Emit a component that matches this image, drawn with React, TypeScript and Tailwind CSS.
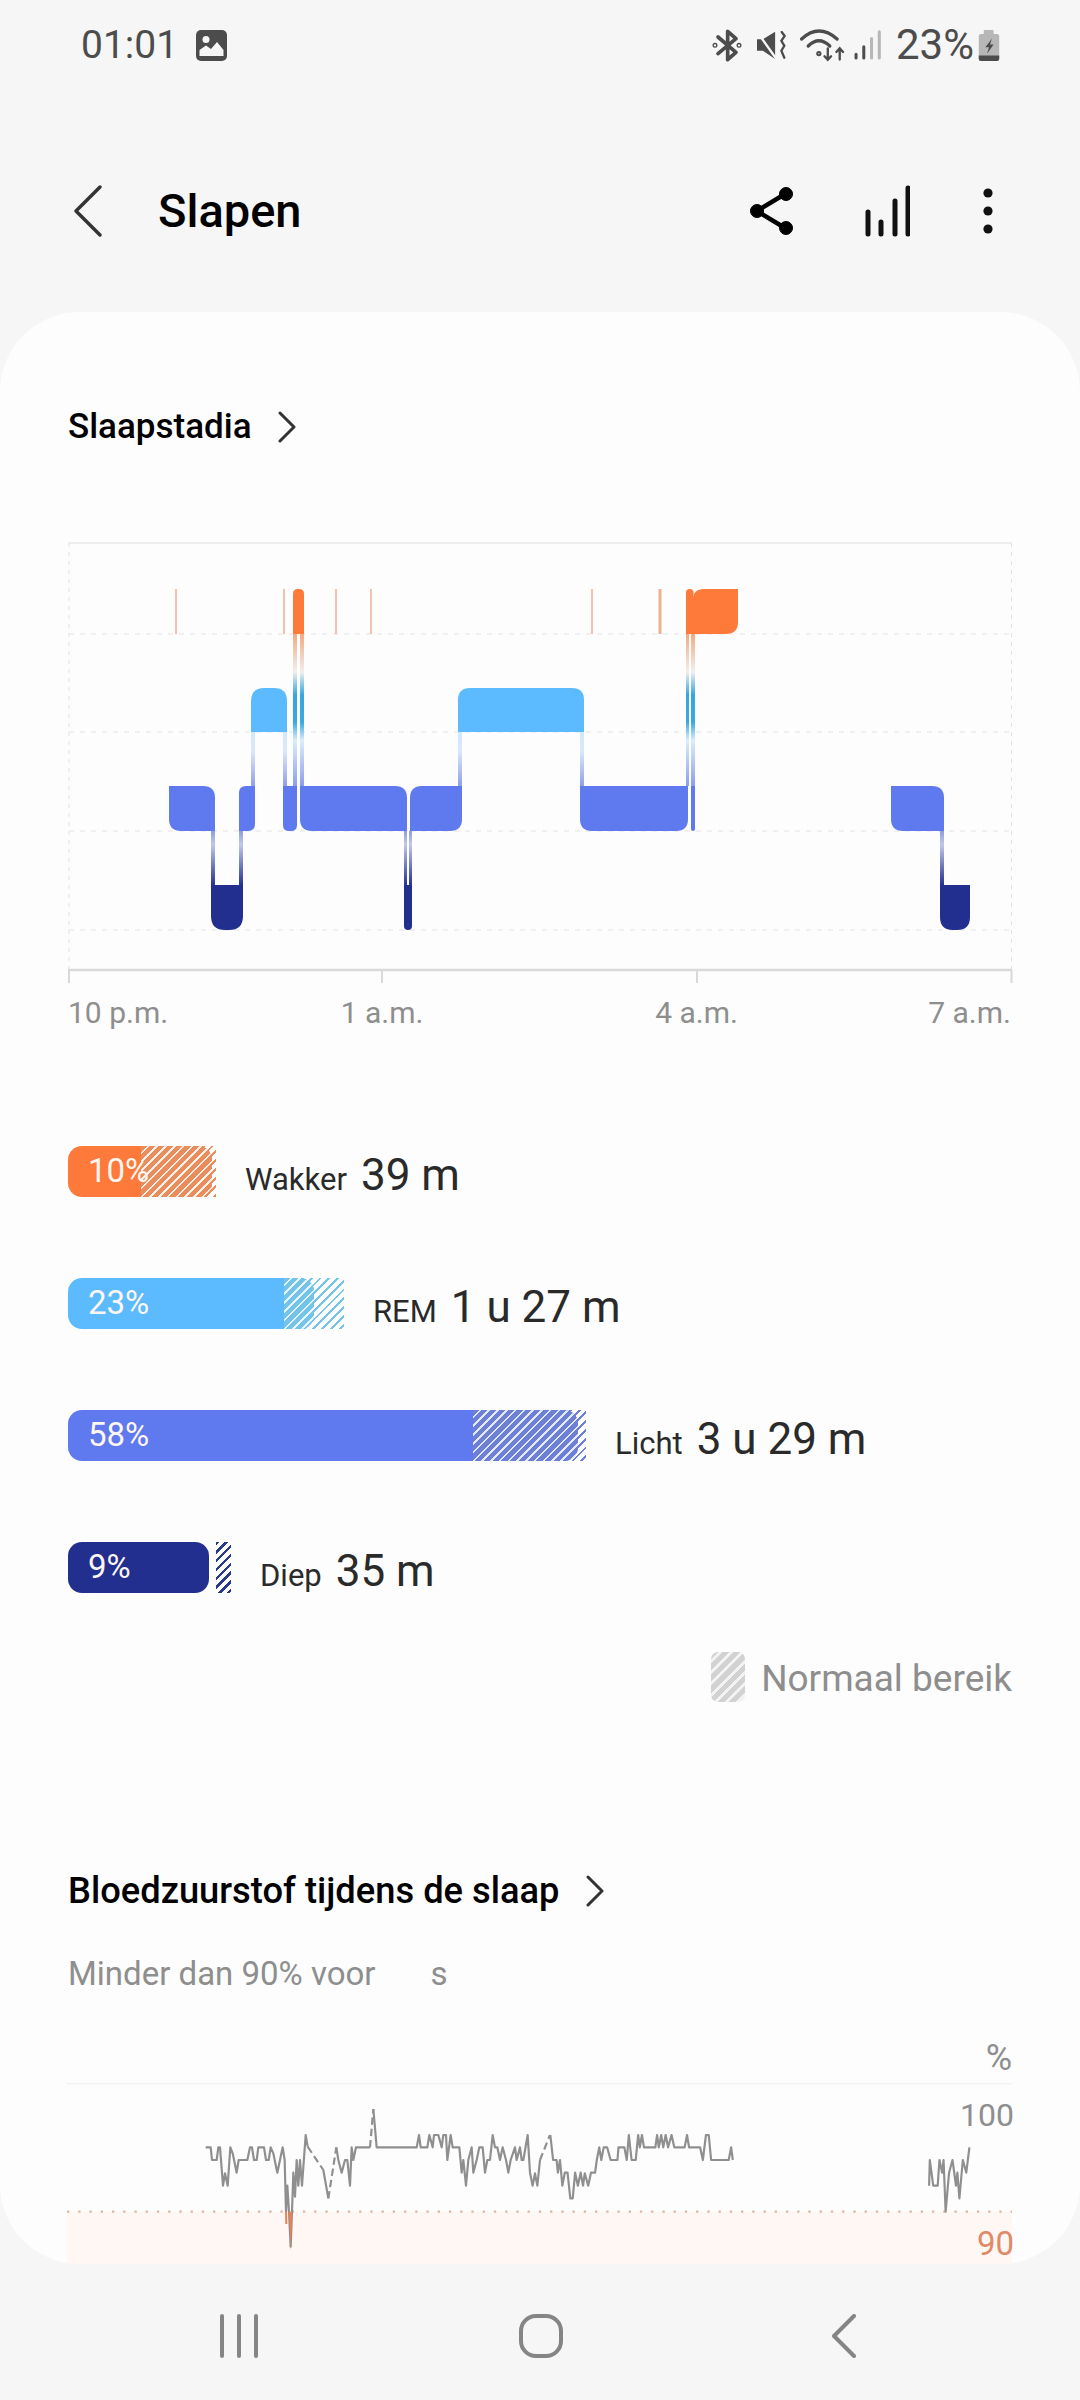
// Sleep detail screen
const ORANGE = "#fd7a3b";
const REM = "#5cbbfe";
const LIGHT = "#5f79ee";
const DEEP = "#222f8e";

// rounded rect with its own radius per corner, for the hypnogram blocks
function rr(x0: number, y0: number, x1: number, y1: number, tl: number, tr: number, br: number, bl: number) {
  return `M${x0 + tl} ${y0}H${x1 - tr}Q${x1} ${y0} ${x1} ${y0 + tr}V${y1 - br}Q${x1} ${y1} ${x1 - br} ${y1}H${x0 + bl}Q${x0} ${y1} ${x0} ${y1 - bl}V${y0 + tl}Q${x0} ${y0} ${x0 + tl} ${y0}Z`;
}

const lightBlocks = [
  rr(169, 786, 215, 831, 0, 12, 0, 12),
  rr(239, 786, 255, 831, 7, 0, 7, 0),
  rr(283, 786, 297, 831, 0, 0, 6, 6),
  rr(300, 786, 407, 831, 0, 12, 0, 12),
  rr(410, 786, 462, 831, 12, 0, 12, 0),
  rr(580, 786, 688, 831, 0, 0, 12, 12),
  rr(691, 786, 695, 831, 0, 0, 2, 2),
  rr(891, 786, 944, 831, 0, 12, 0, 12),
];
const remBlocks = [rr(251, 688, 287, 732, 13, 13, 0, 0), rr(458, 688, 584, 732, 12, 12, 0, 0)];
const deepBlocks = [
  rr(211, 885, 243, 930, 0, 0, 14, 14),
  rr(404, 885, 412, 930, 0, 0, 4, 4),
  rr(940, 885, 970, 930, 0, 0, 13, 13),
];
const awakeBlocks = [rr(293, 589, 304, 634, 5, 5, 0, 0), rr(686, 589, 693.5, 634, 3.5, 3.5, 0, 0), rr(693, 589, 738, 634, 11, 0, 12, 0)];

function SleepChart() {
  return (
    <svg viewBox="68 540 946 445" className="block h-[445px] w-[946px]">
      <defs>
        <linearGradient id="lightDeep" x1="0" y1="0" x2="0" y2="1">
          <stop offset="0" stopColor="#8f9eda" />
          <stop offset="0.25" stopColor="#c0c8e8" />
          <stop offset="1" stopColor="#27348f" />
        </linearGradient>
        <linearGradient id="remLight" x1="0" y1="0" x2="0" y2="1">
          <stop offset="0" stopColor="#cfe9fc" />
          <stop offset="0.35" stopColor="#dbe8fa" />
          <stop offset="1" stopColor="#8fa0e8" />
        </linearGradient>
        <linearGradient id="awakeLight" x1="0" y1="0" x2="0" y2="1">
          <stop offset="0" stopColor="#f2a980" />
          <stop offset="0.25" stopColor="#f1efee" />
          <stop offset="0.4" stopColor="#38a6dd" />
          <stop offset="0.58" stopColor="#3ba8e0" />
          <stop offset="0.7" stopColor="#dcedfb" />
          <stop offset="1" stopColor="#8c9eea" />
        </linearGradient>
      </defs>

      <line x1="68" x2="1012" y1="543" y2="543" stroke="#eeeeee" strokeWidth="2" />
      {[634, 732, 831, 930].map((y) => (
        <line key={y} x1="69" x2="1011" y1={y} y2={y} stroke="#e4e4e4" strokeWidth="1.2" strokeDasharray="5 6" />
      ))}
      {[69, 1011.5].map((x) => (
        <line key={x} x1={x} x2={x} y1="543" y2="970" stroke="#e2e2e2" strokeWidth="1" strokeDasharray="4 5" />
      ))}

      {/* transitions */}
      {[
        [211, 215],
        [239, 243],
        [404, 407],
        [409, 412],
        [940, 944],
      ].map(([a, b]) => (
        <rect key={a} x={a} y="831" width={b - a} height="54" fill="url(#lightDeep)" />
      ))}
      {[
        [251, 255],
        [283, 287],
        [458, 462],
        [580, 584],
      ].map(([a, b]) => (
        <rect key={a} x={a} y="732" width={b - a} height="54" fill="url(#remLight)" />
      ))}
      {[
        [293, 297],
        [300, 304],
        [686, 689],
        [691, 695],
      ].map(([a, b]) => (
        <rect key={a} x={a} y="634" width={b - a} height="152" fill="url(#awakeLight)" />
      ))}

      {/* short awake moments */}
      {[176, 284, 336, 371, 592].map((x) => (
        <line key={x} x1={x} x2={x} y1="589" y2="634" stroke="#f0c3aa" strokeWidth="2" />
      ))}
      <line x1="660" x2="660" y1="589" y2="634" stroke="#efb08f" strokeWidth="3" />

      {awakeBlocks.map((d) => (
        <path key={d} d={d} fill={ORANGE} />
      ))}
      {remBlocks.map((d) => (
        <path key={d} d={d} fill={REM} />
      ))}
      {lightBlocks.map((d) => (
        <path key={d} d={d} fill={LIGHT} />
      ))}
      {deepBlocks.map((d) => (
        <path key={d} d={d} fill={DEEP} />
      ))}

      <line x1="68" x2="1012" y1="970" y2="970" stroke="#d9d9d9" strokeWidth="2.5" />
      {[69, 382, 697, 1011.5].map((x) => (
        <line key={x} x1={x} x2={x} y1="970" y2="983" stroke="#d9d9d9" strokeWidth="2" />
      ))}
    </svg>
  );
}

const stages = [
  {
    pct: "10%",
    label: "Wakker",
    value: "39 m",
    wrap: "w-[148px]",
    solid: "w-[144px] bg-[#fd7a3b]",
    over: "left-[73px] w-[71px] bg-[repeating-linear-gradient(135deg,#e98d5c_0_4.4px,#fff1e9_4.4px_6.2px)]",
    outer: "left-[73px] w-[75px] bg-[repeating-linear-gradient(135deg,#e98d5c_0_2px,#ffffff_2px_6.2px)]",
  },
  {
    pct: "23%",
    label: "REM",
    value: "1 u 27 m",
    wrap: "w-[276px]",
    solid: "w-[246px] bg-[#5cbbfe]",
    over: "left-[216px] w-[30px] bg-[repeating-linear-gradient(135deg,#74c3e8_0_4.4px,#e6f5fd_4.4px_6.2px)]",
    outer: "left-[216px] w-[60px] bg-[repeating-linear-gradient(135deg,#74c3e8_0_2px,#ffffff_2px_6.2px)]",
  },
  {
    pct: "58%",
    label: "Licht",
    value: "3 u 29 m",
    wrap: "w-[518px]",
    solid: "w-[510px] bg-[#5f79ee]",
    over: "left-[405px] w-[105px] bg-[repeating-linear-gradient(135deg,#6b80d6_0_4.4px,#e3e8fb_4.4px_6.2px)]",
    outer: "left-[405px] w-[113px] bg-[repeating-linear-gradient(135deg,#6b80d6_0_2px,#ffffff_2px_6.2px)]",
  },
  {
    pct: "9%",
    label: "Diep",
    value: "35 m",
    wrap: "w-[163px]",
    solid: "w-[141px] bg-[#222f8e]",
    over: "",
    outer: "left-[148px] w-[15px] bg-[repeating-linear-gradient(135deg,#2a3a8a_0_2.4px,#ffffff_2.4px_6.2px)]",
  },
];

function StageRow({ s }: { s: (typeof stages)[number] }) {
  return (
    <div className="flex h-[51px] items-center">
      <div className={`relative h-[51px] shrink-0 ${s.wrap}`}>
        <div className={`absolute inset-y-0 ${s.outer}`} />
        <div className={`absolute inset-y-0 left-0 overflow-hidden rounded-[14px] ${s.solid}`}>
          {s.over && <div className={`absolute inset-y-0 ${s.over}`} />}
          <span className="absolute left-[20px] top-[5px] text-[33px] leading-[40px] text-[#fdf6f2]">{s.pct}</span>
        </div>
      </div>
      <div className="ml-[29px] mt-[11px] flex items-baseline gap-[14px] whitespace-nowrap text-[#2a2a2a]">
        <span className="text-[31px] leading-[44px]">{s.label}</span>
        <span className="text-[44px] leading-[44px]">{s.value}</span>
      </div>
    </div>
  );
}

// trace read off two crops: first one at x3 of page px, second one offset by 500 page px at x2.904
const fromRightCrop = (pts: string) =>
  pts
    .split(" ")
    .map((p) => {
      const [x, y] = p.split(",").map(Number);
      return `${(1500 + x * 1.033).toFixed(1)},${y}`;
    })
    .join(" ");

const traceMain =
  "497,382 512,382 516,420 530,420 535,382 540,382 549,497 555,460 563,497 571,382 578,400 590,458 596,420 622,420 630,382 636,382 642,420 650,420 655,382 672,382 678,420 686,420 692,382 700,400 704,420 712,458 722,410 728,382 734,420 738,575 742,497 747,575 752,680 756,575 760,458 765,530 770,420 775,497 780,420 786,497 797,345 803,380";
const traceB = "850,450 865,535";
const traceC = "889,382 895,420 905,458 915,420 922,420 930,497 935,382 940,420 948,382 990,382";
const traceD =
  "1000,267 1010,382 1130,382 1137,345 1142,382 1162,382 1168,345 1178,382 1182,345 1195,345 1205,382 1210,345 1218,345 1222,420 1232,345 1238,382 1258,382 1265,458 1270,420 1278,497 1285,420 1295,382 1300,458 1310,420 1318,382 1328,382 1335,458 1342,420 1350,420 1358,345 1365,382 1372,382 1380,420 1388,382 1398,420 1405,458 1412,420 1425,382 1430,420 1440,382 1445,420 1450,420 1463,345 1470,458 1478,497 1485,460 1492,497 1500,420";
const traceE = fromRightCrop(
  "30,345 38,420 48,420 52,458 58,420 65,497 72,458 80,458 88,535 95,535 102,458 110,497 118,458 125,497 130,460 140,497 148,458 160,458 165,420 172,382 178,420 185,382 195,382 205,420 225,420 228,382 245,382 252,420 258,345 266,420 278,420 285,345 290,382 296,345 302,382 335,382 340,345 345,382 352,345 358,382 365,345 372,382 382,345 390,382 420,382 427,345 433,382 465,382 473,420 482,345 490,345 497,420 548,420 555,382 560,420",
);
const traceF = fromRightCrop(
  "1130,497 1132,420 1142,497 1155,497 1160,420 1168,458 1172,420 1178,575 1188,458 1198,420 1208,497 1212,458 1218,535 1228,420 1238,458 1247,382",
);

function OxygenChart() {
  return (
    <div className="relative -ml-px h-[182px] w-[945px]">
      <svg viewBox="81 189 2835 546" className="block h-[182px] w-[945px]">
        <rect x="81" y="575" width="2835" height="160" fill="#fff7f3" />
        <line x1="81" x2="2916" y1="189" y2="189" stroke="#f2f2f2" strokeWidth="7" />
        <line x1="81" x2="2916" y1="575" y2="575" stroke="#dcb8a4" strokeWidth="7" strokeDasharray="7 26.7" />
        <g fill="none" stroke="#8f8f8f" strokeWidth="6.5" strokeLinejoin="round">
          {[traceMain, traceB, traceC, traceD, traceE, traceF].map((p) => (
            <polyline key={p} points={p} />
          ))}
          <g strokeDasharray="22 12">
            <polyline points="803,380 850,450" />
            <polyline points="865,535 889,382" />
            <polyline points="990,382 1000,267" />
            <polyline points="1500,420 1530,345" />
          </g>
        </g>
        <polygon points="735,575 745,575 747,575 752,692 757,575" fill="#ec7f58" />
        <line x1="738" x2="739" y1="575" y2="612" stroke="#ec7f58" strokeWidth="6" />
      </svg>
      <span className="absolute -right-[2px] top-[15px] text-[32px] leading-[34px] text-[#8e8e8e]">100</span>
      <span className="absolute -right-[2px] top-[144px] text-[33px] leading-[34px] text-[#e08a68]">90</span>
    </div>
  );
}

function StatusBar() {
  return (
    <div className="flex h-[90px] items-center pl-[81px] pr-[79px] text-[#4c4c4c]">
      <span className="text-[39px] leading-[44px]">01:01</span>
      <svg viewBox="0 0 31 31" className="ml-[18px] h-[31px] w-[31px]">
        <rect width="31" height="31" rx="5" fill="#4c4c4c" />
        <circle cx="10" cy="9.5" r="3.5" fill="#f6f6f6" />
        <path d="M3.5 26V20L10 15.5L15 19L21 12L27.5 20V26Z" fill="#f6f6f6" />
      </svg>
      <svg viewBox="90 85 90 105" className="ml-auto h-[35px] w-[30px]" fill="none" stroke="#4c4c4c" strokeWidth="11" strokeLinejoin="round" strokeLinecap="round">
        <path d="M108 112L162 158L137 180V95L162 117L108 162" />
        <circle cx="99" cy="137" r="2" />
        <circle cx="171" cy="137" r="2" />
      </svg>
      <svg viewBox="220 95 92 88" className="ml-[13px] h-[29px] w-[31px]">
        <path d="M225 120H243L280 97V180L243 155H225Z" fill="#4c4c4c" />
        <path d="M224 96L284 180" stroke="#f6f6f6" strokeWidth="7" />
        <path d="M300 98L309 110L299 125L308 140L299 155L308 176" fill="none" stroke="#4c4c4c" strokeWidth="7" strokeLinecap="round" />
      </svg>
      <svg viewBox="350 85 145 105" className="ml-[13px] h-[35px] w-[48px]" fill="none" stroke="#4c4c4c" strokeWidth="10" strokeLinecap="round">
        <path d="M358 118Q410 70 465 118" />
        <path d="M378 139Q410 108 443 139" />
        <circle cx="410" cy="162" r="3" />
        <path d="M437 146V180M427 170L437 181L447 170" strokeWidth="7" />
        <path d="M473 180V147M463 157L473 146L483 157" strokeWidth="7" />
      </svg>
      <svg viewBox="510 90 95 95" className="ml-[5px] h-[32px] w-[32px]" fill="none" strokeWidth="9" strokeLinecap="round">
        <path d="M522 165V176M545 143V176" stroke="#4c4c4c" />
        <path d="M568 118V176M591 98V176" stroke="#b7b7b7" />
      </svg>
      <span className="ml-[12px] text-[42px] leading-[44px]">23%</span>
      <svg viewBox="890 85 72 100" className="ml-[3px] h-[33px] w-[24px]">
        <rect x="910" y="88" width="30" height="18" rx="3" fill="#b7b7b7" />
        <rect x="895" y="100" width="62" height="82" rx="7" fill="#b7b7b7" />
        <path d="M895 165H957V175Q957 182 950 182H902Q895 182 895 175Z" fill="#4c4c4c" />
        <path d="M935 114L915 140H926L920 160L940 132H929Z" fill="#4c4c4c" />
      </svg>
    </div>
  );
}

function Header() {
  return (
    <div className="flex h-[222px] items-center pb-[2px] pl-[74px] pt-[22px]">
      <svg viewBox="0 0 28 52" className="h-[52px] w-[28px]" fill="none" stroke="#333333" strokeWidth="3.4" strokeLinecap="round" strokeLinejoin="round">
        <path d="M26 2L2 26L26 50" />
      </svg>
      <span className="ml-[56px] text-[47px] font-medium leading-[60px] text-black">Slapen</span>
      <svg viewBox="0 0 44 48" className="ml-auto h-[48px] w-[44px]" fill="#000000" stroke="#000000">
        <path d="M35 7L7 24L35 41" fill="none" strokeWidth="4.5" />
        <circle cx="36" cy="7" r="6.5" />
        <circle cx="7" cy="24" r="6.5" />
        <circle cx="36" cy="41" r="6.5" />
      </svg>
      <svg viewBox="0 0 46 52" className="ml-[70px] h-[52px] w-[46px]" fill="none" stroke="#111111" strokeWidth="5" strokeLinecap="round">
        <path d="M4 27V49M17 37V49M31 16V49M44 3V49" />
      </svg>
      <svg viewBox="0 0 10 46" className="ml-[73px] mr-[87px] h-[46px] w-[10px]" fill="#111111">
        <circle cx="5" cy="5" r="4.6" />
        <circle cx="5" cy="23" r="4.6" />
        <circle cx="5" cy="41" r="4.6" />
      </svg>
    </div>
  );
}

function SectionTitle({ title, size }: { title: string; size: string }) {
  return (
    <div className="flex h-[44px] items-center text-black">
      <span className={`font-medium leading-[44px] ${size}`}>{title}</span>
      <svg viewBox="0 0 18 32" className="ml-[26px] h-[32px] w-[18px]" fill="none" stroke="#333333" strokeWidth="3" strokeLinecap="round" strokeLinejoin="round">
        <path d="M2 2L16 16L2 30" />
      </svg>
    </div>
  );
}

function NavBar() {
  return (
    <div className="flex flex-1 items-center pl-[219px] pt-[8px]">
      <svg viewBox="0 0 40 44" className="h-[44px] w-[40px]" fill="none" stroke="#858585" strokeWidth="4" strokeLinecap="round">
        <path d="M3 2V42M20 2V42M37 2V42" />
      </svg>
      <svg viewBox="0 0 44 44" className="ml-[260px] h-[44px] w-[44px]" fill="none" stroke="#858585" strokeWidth="4">
        <rect x="2" y="2" width="40" height="40" rx="15" />
      </svg>
      <svg viewBox="0 0 24 44" className="ml-[269px] h-[44px] w-[24px]" fill="none" stroke="#858585" strokeWidth="4" strokeLinecap="round" strokeLinejoin="round">
        <path d="M22 2L2 22L22 42" />
      </svg>
    </div>
  );
}

export default function App() {
  return (
    <div className="flex h-[2400px] w-[1080px] flex-col overflow-hidden bg-[#f6f6f6] font-['Roboto',sans-serif]">
      <StatusBar />
      <Header />
      <div className="h-[1952px] shrink-0 overflow-hidden rounded-[80px] bg-[#fdfdfd] px-[68px] pt-[93px]">
        <SectionTitle title="Slaapstadia" size="text-[35px]" />
        <div className="mt-[91px]">
          <SleepChart />
        </div>
        <div className="mt-[8px] grid h-[40px] grid-cols-[157px_314px_315px_157px] items-center text-[30px] leading-[40px] text-[#8e8e8e]">
          <span>10 p.m.</span>
          <span className="text-center">1 a.m.</span>
          <span className="text-center">4 a.m.</span>
          <span className="text-right">7 a.m.</span>
        </div>
        <div className="mt-[113px] flex flex-col gap-[81px]">
          {stages.map((s) => (
            <StageRow key={s.label} s={s} />
          ))}
        </div>
        <div className="mt-[59px] flex h-[50px] items-center justify-end gap-[16px]">
          <div className="h-[50px] w-[34px] rounded-[7px] bg-[repeating-linear-gradient(135deg,#d2d2d2_0_5px,#f3f3f3_5px_8px)]" />
          <span className="mt-[3px] text-[37px] leading-[44px] text-[#8e8e8e]">Normaal bereik</span>
        </div>
        <div className="mt-[167px]">
          <SectionTitle title="Bloedzuurstof tijdens de slaap" size="text-[36.3px]" />
        </div>
        <div className="mt-[41px] flex h-[40px] items-center text-[33px] leading-[40px] text-[#8e8e8e]">
          <span>Minder dan 90% voor</span>
          <span className="ml-[55px]">s</span>
        </div>
        <div className="mt-[44px] h-[40px] text-right text-[36px] leading-[40px] text-[#8e8e8e]">%</div>
        <div className="mt-[5px]">
          <OxygenChart />
        </div>
      </div>
      <NavBar />
    </div>
  );
}
